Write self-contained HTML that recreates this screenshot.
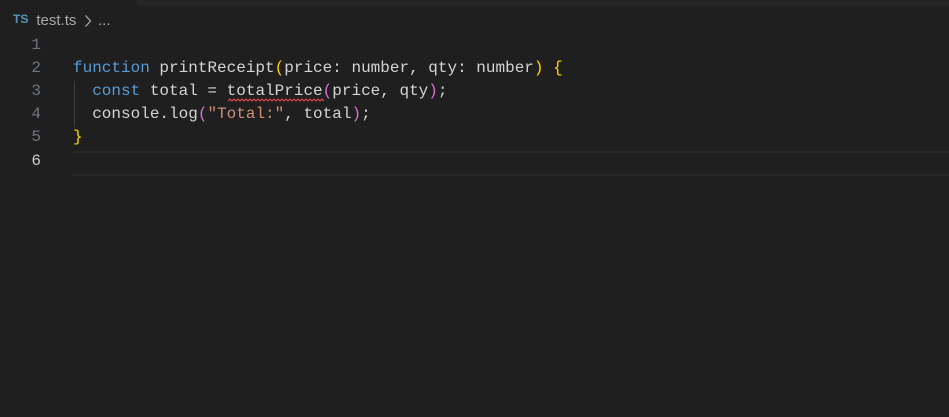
<!DOCTYPE html>
<html><head><meta charset="utf-8">
<style>
html,body{margin:0;padding:0;width:949px;height:417px;overflow:hidden;background:#1f1f1f;}
.top{position:absolute;left:137px;top:0;width:812px;height:6px;background:#252526;}
.bc{position:absolute;left:13px;top:12px;font-family:"Liberation Sans",sans-serif;font-size:15px;color:#a9a9a9;white-space:pre;}
.bc .ts{color:#519aba;font-weight:bold;font-size:12px;margin-right:8px;position:relative;top:-2px;}
.ln{position:absolute;left:0;width:41px;text-align:right;font-family:"Liberation Mono",monospace;font-size:16px;color:#6e7681;line-height:23px;}
.ln.cur{color:#cccccc;}
.code{position:absolute;left:73px;font-family:"Liberation Mono",monospace;font-size:16px;color:#d4d4d4;line-height:23px;white-space:pre;}
.k{color:#569cd6}.s{color:#ce9178}.y{color:#ffd700}.p{color:#da70d6}
.curline{position:absolute;left:73px;top:151px;width:876px;height:21px;border-top:2px solid #282828;border-bottom:2px solid #282828;}
.guide{position:absolute;left:74px;top:81px;width:1px;height:46px;background:#404040;}
</style></head><body>
<div class="top"></div>
<div class="bc"><span class="ts">TS</span>test.ts</div>
<svg style="position:absolute;left:84px;top:14px" width="8" height="14"><path d="M1.5 1.5 L6.5 7 L1.5 12.5" fill="none" stroke="#a9a9a9" stroke-width="1.3"/></svg>
<div class="bc" style="left:98px">...</div>
<div class="curline"></div>
<div class="guide"></div>
<div class="ln" style="top:34px">1</div>
<div class="ln" style="top:57px">2</div>
<div class="ln" style="top:80px">3</div>
<div class="ln" style="top:103px">4</div>
<div class="ln" style="top:126px">5</div>
<div class="ln cur" style="top:150px">6</div>
<div class="code" style="top:57px"><span class="k">function</span> printReceipt<span class="y">(</span>price: number, qty: number<span class="y">)</span> <span class="y">{</span></div>
<div class="code" style="top:80px">  <span class="k">const</span> total = totalPrice<span class="p">(</span>price, qty<span class="p">)</span>;</div>
<div class="code" style="top:103px">  console.log<span class="p">(</span><span class="s">"Total:"</span>, total<span class="p">)</span>;</div>
<div class="code" style="top:126px"><span class="y">}</span></div>
<svg style="position:absolute;left:228px;top:98px" width="96" height="5"><path d="M0 3 l2 -2 l2 2 l2 -2 l2 2 l2 -2 l2 2 l2 -2 l2 2 l2 -2 l2 2 l2 -2 l2 2 l2 -2 l2 2 l2 -2 l2 2 l2 -2 l2 2 l2 -2 l2 2 l2 -2 l2 2 l2 -2 l2 2 l2 -2 l2 2 l2 -2 l2 2 l2 -2 l2 2 l2 -2 l2 2 l2 -2 l2 2 l2 -2 l2 2 l2 -2 l2 2 l2 -2 l2 2 l2 -2 l2 2 l2 -2 l2 2 l2 -2 l2 2 l2 -2 l2 2 l2 -2" fill="none" stroke="#f14c4c" stroke-width="1"/></svg>
</body></html>
